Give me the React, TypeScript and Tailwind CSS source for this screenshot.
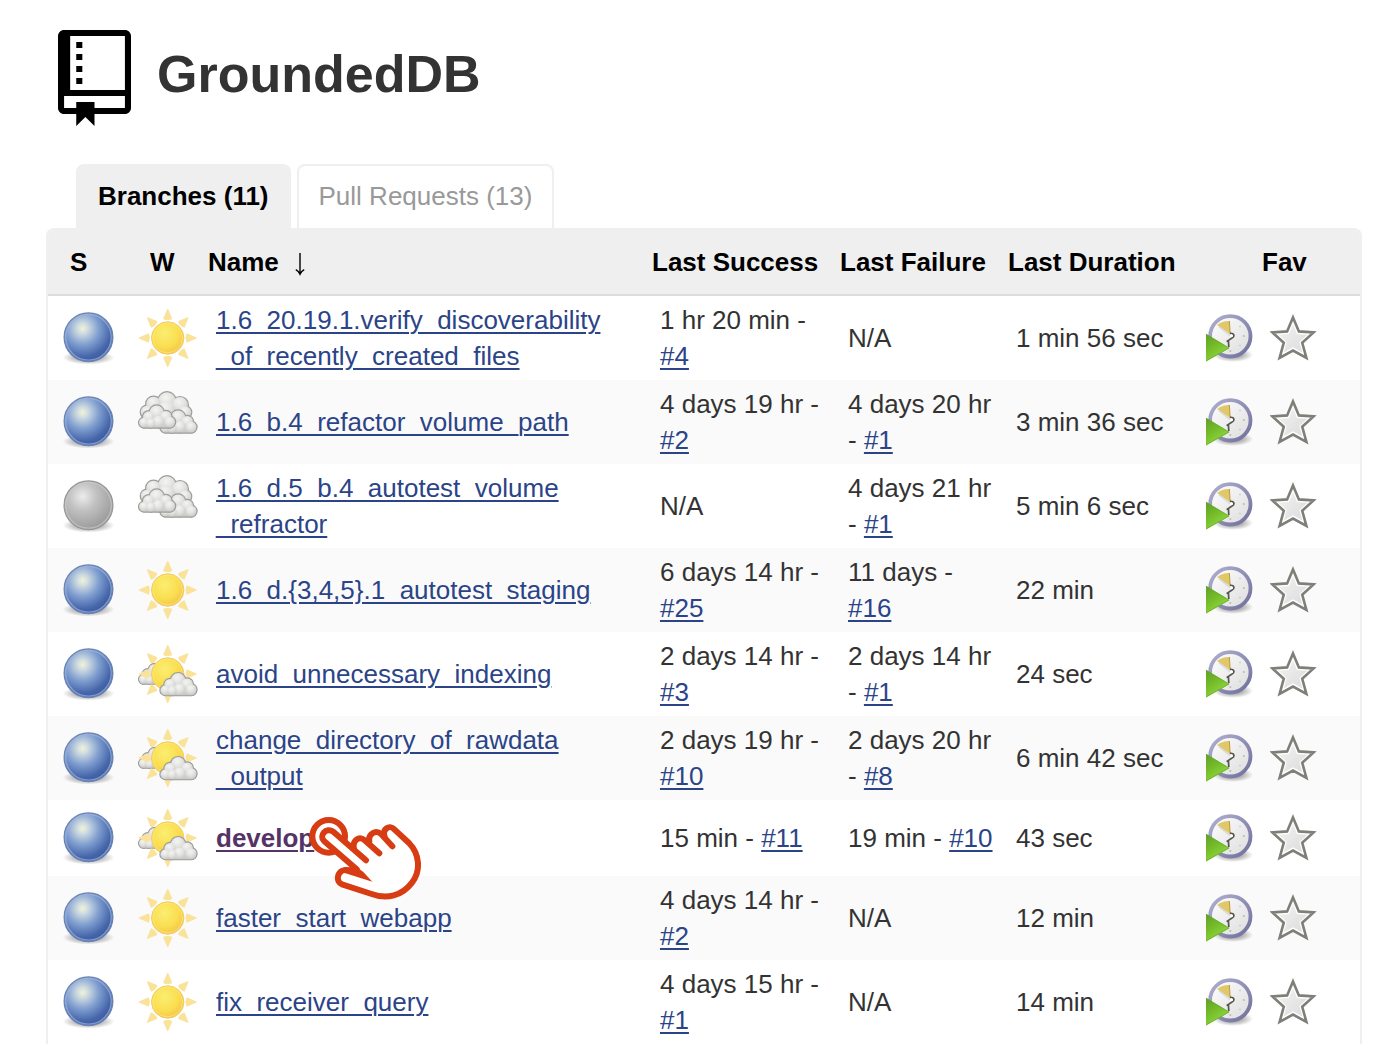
import React from "react";

type Status = "blue" | "grey";
type Weather = "sunny" | "cloudy" | "partly";
type Run = { ago: string; build: string } | null;

interface Branch {
  status: Status;
  weather: Weather;
  name: string[];
  success: Run;
  failure: Run;
  duration: string;
  current?: boolean;
}

const branches: Branch[] = [
  { status: "blue", weather: "sunny", name: ["1.6_20.19.1.verify_discoverability", "_of_recently_created_files"], success: { ago: "1 hr 20 min", build: "#4" }, failure: null, duration: "1 min 56 sec" },
  { status: "blue", weather: "cloudy", name: ["1.6_b.4_refactor_volume_path"], success: { ago: "4 days 19 hr", build: "#2" }, failure: { ago: "4 days 20 hr", build: "#1" }, duration: "3 min 36 sec" },
  { status: "grey", weather: "cloudy", name: ["1.6_d.5_b.4_autotest_volume", "_refractor"], success: null, failure: { ago: "4 days 21 hr", build: "#1" }, duration: "5 min 6 sec" },
  { status: "blue", weather: "sunny", name: ["1.6_d.{3,4,5}.1_autotest_staging"], success: { ago: "6 days 14 hr", build: "#25" }, failure: { ago: "11 days", build: "#16" }, duration: "22 min" },
  { status: "blue", weather: "partly", name: ["avoid_unnecessary_indexing"], success: { ago: "2 days 14 hr", build: "#3" }, failure: { ago: "2 days 14 hr", build: "#1" }, duration: "24 sec" },
  { status: "blue", weather: "partly", name: ["change_directory_of_rawdata", "_output"], success: { ago: "2 days 19 hr", build: "#10" }, failure: { ago: "2 days 20 hr", build: "#8" }, duration: "6 min 42 sec" },
  { status: "blue", weather: "partly", name: ["develop"], success: { ago: "15 min", build: "#11" }, failure: { ago: "19 min", build: "#10" }, duration: "43 sec", current: true },
  { status: "blue", weather: "sunny", name: ["faster_start_webapp"], success: { ago: "4 days 14 hr", build: "#2" }, failure: null, duration: "12 min" },
  { status: "blue", weather: "sunny", name: ["fix_receiver_query"], success: { ago: "4 days 15 hr", build: "#1" }, failure: null, duration: "14 min" },
];

function Gradients() {
  return (
    <svg className="absolute size-0" aria-hidden="true">
      <defs>
        <radialGradient id="ballBlue" cx="0.38" cy="0.32" r="0.68">
          <stop offset="0" stopColor="#f0f3d8" />
          <stop offset="0.16" stopColor="#cfdbe0" />
          <stop offset="0.5" stopColor="#7e9dcf" />
          <stop offset="0.85" stopColor="#4767ab" />
          <stop offset="1" stopColor="#3f5c9f" />
        </radialGradient>
        <radialGradient id="ballGrey" cx="0.38" cy="0.32" r="0.7">
          <stop offset="0" stopColor="#ececec" />
          <stop offset="0.4" stopColor="#c2c2c2" />
          <stop offset="1" stopColor="#999" />
        </radialGradient>
        <radialGradient id="shade">
          <stop offset="0" stopColor="#000" stopOpacity="0.5" />
          <stop offset="0.6" stopColor="#000" stopOpacity="0.22" />
          <stop offset="1" stopColor="#000" stopOpacity="0" />
        </radialGradient>
        <radialGradient id="sunFill" cx="0.4" cy="0.35" r="0.7">
          <stop offset="0" stopColor="#fbee72" />
          <stop offset="0.6" stopColor="#fade50" />
          <stop offset="1" stopColor="#f3c14a" />
        </radialGradient>
        <linearGradient id="cloudBase" x1="0" y1="0" x2="0" y2="1">
          <stop offset="0" stopColor="#dcdcda" />
          <stop offset="1" stopColor="#c8c8c5" />
        </linearGradient>
        <radialGradient id="cloudPuff" cx="0.42" cy="0.3" r="0.72">
          <stop offset="0" stopColor="#f4f4f3" />
          <stop offset="0.5" stopColor="#e4e4e2" />
          <stop offset="1" stopColor="#cbcbc8" />
        </radialGradient>
        <linearGradient id="clockRim" x1="0" y1="0" x2="1" y2="1">
          <stop offset="0" stopColor="#b0b0d0" />
          <stop offset="1" stopColor="#6f6f9c" />
        </linearGradient>
        <linearGradient id="clockFace" x1="0" y1="0" x2="1" y2="1">
          <stop offset="0" stopColor="#fff" />
          <stop offset="1" stopColor="#dcdcdc" />
        </linearGradient>
        <linearGradient id="playFill" x1="0" y1="0" x2="0.6" y2="1">
          <stop offset="0" stopColor="#5f9f26" />
          <stop offset="0.5" stopColor="#76bd2b" />
          <stop offset="1" stopColor="#92de42" />
        </linearGradient>
        <linearGradient id="starFill" x1="0" y1="0" x2="1" y2="1">
          <stop offset="0" stopColor="#f2f2f2" />
          <stop offset="1" stopColor="#dcdcdc" />
        </linearGradient>
      </defs>
    </svg>
  );
}

function Ball({ status }: { status: Status }) {
  const grey = status === "grey";
  return (
    <svg className="block size-16" viewBox="0 0 64 64" role="img" aria-label={grey ? "Not built" : "Success"}>
      <ellipse cx="32.5" cy="51.5" rx="26" ry="7" fill="url(#shade)" />
      <circle cx="32.5" cy="31.3" r="24.4" fill={grey ? "url(#ballGrey)" : "url(#ballBlue)"} stroke={grey ? "#969696" : "#6b83b4"} strokeWidth="1.2" />
      <circle cx="32.5" cy="31.3" r="22.8" fill="none" stroke={grey ? "#c8c8c8" : "#9db4de"} strokeWidth="1.4" opacity="0.7" />
    </svg>
  );
}

function Sun() {
  return (
    <g>
      {[0, 45, 90, 135, 180, 225, 270, 315].map((a) => (
        <path key={a} d="M31.7 3.5L35.6 12.6Q31.7 14.4 27.8 12.6Z" transform={`rotate(${a} 31.7 32)`} fill="#fbe394" stroke="#f9e2a0" strokeWidth="1.2" strokeLinejoin="round" />
      ))}
      <circle cx="31.7" cy="32" r="16.2" fill="url(#sunFill)" stroke="#f3cb6c" strokeWidth="1" />
      <circle cx="31.7" cy="32" r="14.8" fill="none" stroke="#fdeb79" strokeWidth="1" opacity="0.7" />
    </g>
  );
}

type Puff = [cx: number, cy: number, r: number];

const smallCloud: Puff[] = [
  [19.5, 8.6, 7.4],
  [28.6, 12.6, 6],
  [11.5, 13, 6],
  [32.6, 18, 5.6],
  [6.6, 18.6, 5],
  [21, 17.5, 6],
  [13.5, 19, 4.8],
];

const bigCloud: Puff[] = [
  [31, 11, 9],
  [17.5, 14, 7.6],
  [44, 15, 8.2],
  [11, 22, 6.5],
  [49, 22.5, 6.5],
  [30, 20, 9],
];

function CloudShape({ transform, puffs, base }: { transform?: string; puffs: Puff[]; base?: boolean }) {
  return (
    <g transform={transform}>
      <g fill="#9d9d9a" stroke="#9d9d9a" strokeWidth="1.8">
        {puffs.map(([cx, cy, r]) => (
          <circle key={`${cx}-${cy}`} cx={cx} cy={cy} r={r} />
        ))}
        {base && <rect x="3" y="15" width="34" height="8.8" rx="4" />}
      </g>
      {base && <rect x="3.2" y="15" width="33.6" height="8.6" rx="4" fill="url(#cloudBase)" />}
      {puffs.map(([cx, cy, r]) => (
        <circle key={`${cx}-${cy}`} cx={cx} cy={cy} r={r - 0.3} fill="url(#cloudPuff)" />
      ))}
    </g>
  );
}

function WeatherIcon({ weather }: { weather: Weather }) {
  return (
    <svg className="block size-16" viewBox="0 0 64 64" role="img" aria-label={weather}>
      {weather === "sunny" && <Sun />}
      {weather === "partly" && (
        <>
          <CloudShape transform="translate(1.3 20.6) scale(0.9)" puffs={smallCloud} base />
          <Sun />
          <CloudShape transform="translate(22.6 29.6)" puffs={smallCloud} base />
        </>
      )}
      {weather === "cloudy" && (
        <>
          <CloudShape puffs={bigCloud} />
          <CloudShape transform="translate(22.6 19)" puffs={smallCloud} base />
          <CloudShape transform="translate(1.2 14)" puffs={smallCloud} base />
        </>
      )}
    </svg>
  );
}

function ScheduleIcon() {
  return (
    <svg className="block size-12" viewBox="0 0 48 48" aria-hidden="true">
      <ellipse cx="27" cy="41" rx="20" ry="7" fill="url(#shade)" />
      <circle cx="24.3" cy="22.3" r="20.2" fill="url(#clockFace)" stroke="url(#clockRim)" strokeWidth="3.8" />
      <path d="M24.2 20L11.2 11.2Q16.5 6.8 23.4 7Z" fill="#e0c767" />
      <path d="M23.4 7L24.2 20" stroke="#b99c3f" strokeWidth="1" />
      <path d="M13 12.6L24.5 22" stroke="#d8d8d8" strokeWidth="1.6" />
      <path d="M24 19.4C28.4 18.8 29 22.4 26 24L20.6 27.6M22.4 26.4L22.8 33" fill="none" stroke="#55554f" strokeWidth="1.7" />
      <circle cx="25.4" cy="21.8" r="1.5" fill="#fff" />
      <g fill="#b9b9b9">
        <circle cx="24.3" cy="37" r="1" />
        <circle cx="37.8" cy="22" r="1" />
        <circle cx="34" cy="12.5" r=".7" />
        <circle cx="34" cy="31.5" r=".7" />
      </g>
      <path d="M0 19.8L23.6 34L0 47.6Z" fill="url(#playFill)" />
      <path d="M0 20.4L23 34L0 47" fill="none" stroke="#65a927" strokeWidth="1" opacity="0.7" />
    </svg>
  );
}

function StarIcon() {
  return (
    <svg className="block size-12" viewBox="0 0 48 48" aria-hidden="true">
      <path d="M23 3.4L28.9 17.4L43.6 18.4L32.2 28.7L36.4 43.9L23 36.6L9.6 43.9L13.8 28.7L2.4 18.4L17.1 17.4Z" fill="#fff" stroke="#7f7f7a" strokeWidth="2.6" strokeLinejoin="miter" />
      <path d="M23 10L27 20L37.5 20.8L29.4 28L32.3 38.4L23 33.2L13.7 38.4L16.6 28L8.5 20.8L19 20Z" fill="url(#starFill)" />
    </svg>
  );
}

function TapHand() {
  return (
    <svg className="pointer-events-none absolute top-4 left-[100px] z-10 w-[114px]" viewBox="324 48 342 255" aria-hidden="true">
      <g stroke="#d73c12" strokeWidth="18" strokeLinecap="round" strokeLinejoin="round">
        <circle cx="386" cy="109" r="49" fill="#fff" />
        <path
          d="M372 123C356 107 378 80 400 95L462 150C456 128 474 106 494 119L508 128C502 106 526 86 544 104L554 112C545 92 566 72 583 88L627 129C657 160 665 210 636 248C606 288 560 299 515 282L426 253C406 246 411 212 435 210L462 214Z"
          fill="#fff"
          stroke="none"
        />
        <path d="M498 181L400 95C378 80 356 107 372 123L470 208" fill="none" />
        <path d="M462 146C456 122 477 106 494 121L538 160M508 124C504 103 526 87 544 103L577 139M554 110C546 90 567 71 583 88L627 129C657 160 665 210 636 248C606 288 560 299 515 282L426 253C406 246 411 212 435 210" fill="none" />
        <path d="M437 201L456 202L475 205L490 216L517 245L434 219Z" fill="#d73c12" stroke="none" />
      </g>
    </svg>
  );
}

const linkClass = "text-[#2b4488] underline decoration-2 underline-offset-3";

function RunCell({ run }: { run: Run }) {
  return (
    <td className="px-2 py-1.5">
      {run ? (
        <>
          {run.ago} - <a href="#build" className={linkClass}>{run.build}</a>
        </>
      ) : (
        "N/A"
      )}
    </td>
  );
}

export default function App() {
  return (
    <main className="min-h-screen bg-white pt-[30px] pr-7 pl-[46px] font-['Liberation_Sans',Arial,sans-serif] text-[26px] leading-9 text-[#333]">
      <Gradients />
      <header className="flex items-start gap-[26px] pl-3">
        <svg className="h-24 w-[73px]" viewBox="0 0 12 16" preserveAspectRatio="none" aria-hidden="true">
          <path
            fillRule="evenodd"
            d="M4 9H3V8h1v1zm0-3H3v1h1V6zm0-2H3v1h1V4zm0-2H3v1h1V2zm8-1v12c0 .55-.45 1-1 1H6v2l-1.5-1.5L3 16v-2H1c-.55 0-1-.45-1-1V1c0-.55.45-1 1-1h10c.55 0 1 .45 1 1zm-1 10H1v2h2v-1h3v1h5v-2zm0-10H2v9h9V1z"
            fill="#000"
          />
        </svg>
        <h1 className="text-[52px] leading-[88px] font-bold">GroundedDB</h1>
      </header>

      <nav className="mt-[38px] flex gap-1.5 pl-[30px]">
        <a href="#branches" aria-current="page" className="h-16 rounded-t-lg border-2 border-b-0 border-[#efefef] bg-[#efefef] px-5 py-3 font-bold text-black">
          Branches (11)
        </a>
        <a href="#pulls" className="h-16 rounded-t-lg border-2 border-b-0 border-[#efefef] px-5 py-3 text-[#999]">
          Pull Requests (13)
        </a>
      </nav>

      <div className="overflow-hidden rounded-t-lg border-2 border-b-0 border-[#efefef]">
        <table className="w-full table-fixed border-separate border-spacing-0 text-left">
          <colgroup>
            <col className="w-20" />
            <col className="w-20" />
            <col />
            <col className="w-[188px]" />
            <col className="w-[168px]" />
            <col className="w-[190px]" />
            <col className="w-[162px]" />
          </colgroup>
          <thead>
            <tr className="h-[66px] bg-[#efefef] whitespace-nowrap text-black [&>th]:border-b-2 [&>th]:border-[#dcdcdc]">
              <th scope="col" className="pl-[22px]">S</th>
              <th scope="col" className="pl-[22px]">W</th>
              <th scope="col" aria-sort="descending">
                <button type="button" className="flex items-center gap-4 font-bold">
                  Name
                  <svg className="mt-1 h-6 w-3" viewBox="0 0 12 24" fill="none" stroke="currentColor" strokeWidth="1.4" aria-hidden="true">
                    <path d="M5 1V22M0.8 17.6Q3.6 19 5 22.2Q6.4 19 9.2 17.6" />
                  </svg>
                </button>
              </th>
              <th scope="col">Last Success</th>
              <th scope="col">Last Failure</th>
              <th scope="col">Last Duration</th>
              <th scope="col" className="pl-16">Fav</th>
            </tr>
          </thead>
          <tbody>
            {branches.map((b) => (
              <tr key={b.name[0]} className="even:bg-[#fafafa]">
                <td className="px-2 py-1.5"><Ball status={b.status} /></td>
                <td className="px-2 py-1.5"><WeatherIcon weather={b.weather} /></td>
                <td className="relative px-2 py-1.5 whitespace-nowrap">
                  <a href="#branch" className={b.current ? "font-bold text-[#553366] underline decoration-2 underline-offset-3" : linkClass}>
                    {b.name.map((part, i) => (
                      <React.Fragment key={part}>
                        {i > 0 && <br />}
                        {part}
                      </React.Fragment>
                    ))}
                  </a>
                  {b.current && <TapHand />}
                </td>
                <RunCell run={b.success} />
                <RunCell run={b.failure} />
                <td className="px-2 py-1.5">{b.duration}</td>
                <td className="px-2 py-1.5">
                  <div className="flex gap-4">
                    <button type="button" aria-label={`Build ${b.name.join("")}`}><ScheduleIcon /></button>
                    <button type="button" aria-label={`Favorite ${b.name.join("")}`}><StarIcon /></button>
                  </div>
                </td>
              </tr>
            ))}
          </tbody>
        </table>
      </div>
    </main>
  );
}
